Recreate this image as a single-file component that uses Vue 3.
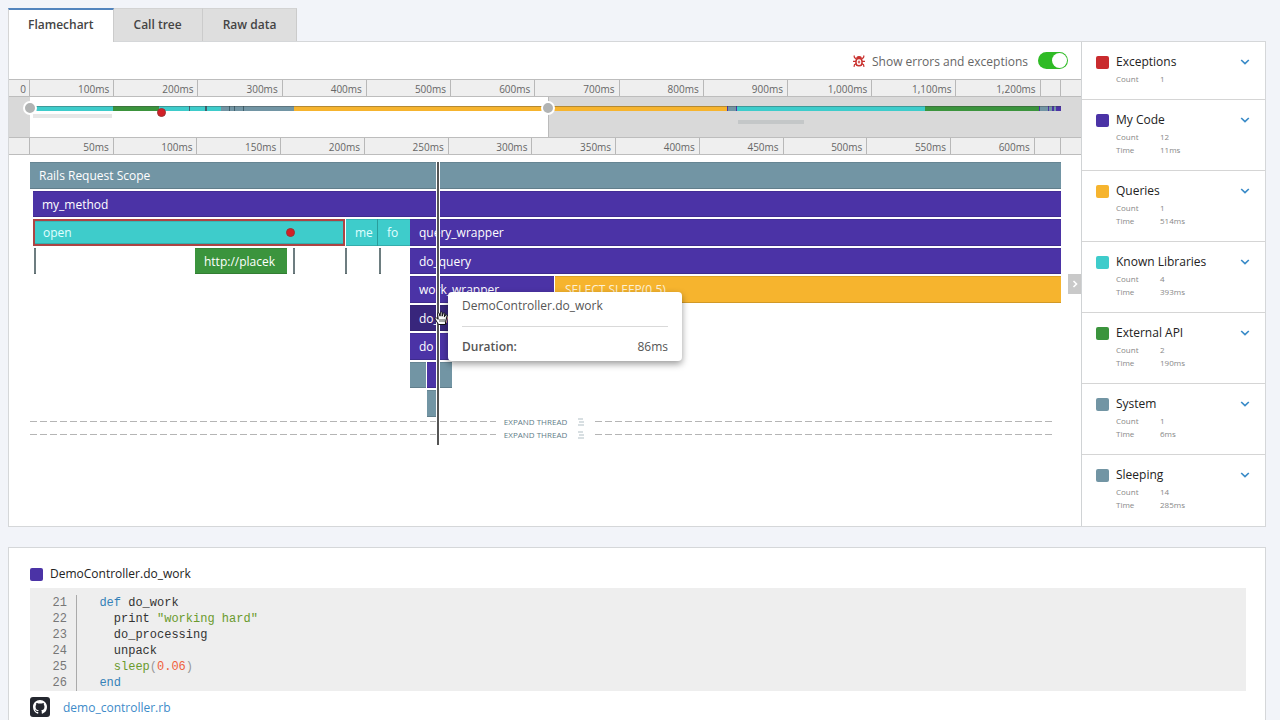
<script setup>
import { ref } from 'vue'

const SPAN = 1031

const tabs = ['Flamechart', 'Call tree', 'Raw data']
const activeTab = ref('Flamechart')
const showErrors = ref(true)

const percent = (units) => `${(units / SPAN) * 100}%`

const makeTicks = (step, total, format) => {
  const count = Math.floor(total / step)
  const ticks = []
  for (let i = 1; i <= count; i++) {
    ticks.push({ label: format(i * step), width: `${(step / total) * 100}%` })
  }
  return ticks
}
const label = (n) => `${n.toLocaleString('en-US')}ms`
const overviewTicks = makeTicks(100, 1223, label)
const detailTicks = makeTicks(50, 615, label)

const lay = (items) => {
  let end = 0
  return items.map(([from, to, kind, name = '', extra = '']) => {
    const style = { marginLeft: percent(from - end), width: percent(to - from) }
    end = to
    return { style, kind, name, extra }
  })
}

const overview = lay([
  [3, 83, 'library'], [83, 129, 'external'], [129, 159, 'library'], [159, 160, 'dark'],
  [160, 175, 'library'], [175, 177, 'dark'], [177, 191, 'library'], [191, 199, 'system'],
  [199, 200, 'dark'], [200, 204, 'system'], [204, 205, 'dark'], [205, 213, 'system'],
  [213, 214, 'dark'], [214, 264, 'system'], [264, 697, 'query'], [697, 698, 'code'],
  [698, 706, 'system'], [706, 707, 'code'], [707, 895, 'library'], [895, 1009, 'external'],
  [1009, 1010, 'code'], [1010, 1018, 'system'], [1018, 1019, 'code'], [1019, 1022, 'system'],
  [1022, 1024, 'code'], [1024, 1026, 'system'], [1026, 1031, 'code']
])

const rows = [
  lay([[0, 1031, 'system', 'Rails Request Scope']]),
  lay([[3, 1031, 'code', 'my_method']]),
  lay([
    [3, 315, 'library', 'open', 'failed'], [316, 348, 'library', 'me', 'split'],
    [348, 380, 'library', 'fo'], [380, 1031, 'code', 'query_wrapper']
  ]),
  lay([
    [4, 6, 'tick'], [165, 257, 'external', 'http://placek'], [263, 265, 'tick'],
    [315, 317, 'tick'], [349, 351, 'tick'], [380, 1031, 'code', 'do_query']
  ]),
  lay([[380, 524, 'code', 'work_wrapper'], [525, 1031, 'query', 'SELECT SLEEP(0.5)']]),
  lay([[380, 524, 'code', 'do_work', 'hovered']]),
  lay([[380, 407, 'code', 'do'], [409, 524, 'code']]),
  lay([[380, 396, 'system'], [397, 407, 'code'], [410, 422, 'system']]),
  lay([[397, 406, 'system']])
]

const groups = [
  { name: 'Exceptions', kind: 'error', count: '1' },
  { name: 'My Code', kind: 'code', count: '12', time: '11ms' },
  { name: 'Queries', kind: 'query', count: '1', time: '514ms' },
  { name: 'Known Libraries', kind: 'library', count: '4', time: '393ms' },
  { name: 'External API', kind: 'external', count: '2', time: '190ms' },
  { name: 'System', kind: 'system', count: '1', time: '6ms' },
  { name: 'Sleeping', kind: 'system', count: '14', time: '285ms' }
]

const code = [
  { n: 21, parts: [['kw', '  def'], ['', ' do_work']] },
  { n: 22, parts: [['', '    print '], ['str', '"working hard"']] },
  { n: 23, parts: [['', '    do_processing']] },
  { n: 24, parts: [['', '    unpack']] },
  { n: 25, parts: [['str', '    sleep'], ['punct', '('], ['num', '0.06'], ['punct', ')']] },
  { n: 26, parts: [['kw', '  end']] }
]
</script>

<template>
  <main class="page">
    <nav class="tabs">
      <button
        v-for="tab in tabs"
        :key="tab"
        type="button"
        class="tab"
        :class="{ active: tab === activeTab }"
        @click="activeTab = tab"
      >{{ tab }}</button>
    </nav>

    <section class="panel profiler">
      <div class="chart">
        <div class="toolbar">
          <svg class="bug" viewBox="0 0 12 12" aria-hidden="true">
            <g fill="none" stroke="#c9322f" stroke-width="1.2">
              <path d="M1 .5 1.5 2.6 3.4 4M11 .5 10.5 2.6 8.6 4M0 6.4h3M12 6.4H9M1 11.8 1.5 9.7 3.4 8.4M11 11.8 10.5 9.7 8.6 8.4" />
              <path d="M3.8 3.2C3.8.9 8.2.9 8.2 3.2Z" fill="#c9322f" />
              <rect x="3" y="3.6" width="6" height="7.2" rx="2.8" stroke-width="1.5" />
              <path d="M6 5.6v2.8M4.8 7h2.4" stroke-width="1" />
            </g>
          </svg>
          <label for="errors">Show errors and exceptions</label>
          <input id="errors" v-model="showErrors" class="switch" type="checkbox" />
        </div>

        <div class="ruler">
          <span class="origin">0</span>
          <div class="scale">
            <span v-for="t in overviewTicks" :key="t.label" class="mark" :style="{ width: t.width }">{{ t.label }}</span>
          </div>
        </div>

        <div class="minimap">
          <div class="map-track">
            <div class="selection" :style="{ width: percent(519) }"></div>
            <div class="shadow-thread" :style="{ left: percent(3), width: percent(79) }"></div>
            <div class="shadow-thread late" :style="{ left: percent(708), width: percent(66) }"></div>
            <div class="strip">
              <i v-for="(s, i) in overview" :key="i" :class="s.kind" :style="s.style"></i>
            </div>
            <span class="handle" :style="{ left: percent(0) }"></span>
            <span class="handle" :style="{ left: percent(518) }"></span>
            <span class="map-dot" :style="{ left: percent(132) }"></span>
          </div>
        </div>

        <div class="ruler">
          <span class="origin"></span>
          <div class="scale">
            <span v-for="t in detailTicks" :key="t.label" class="mark" :style="{ width: t.width }">{{ t.label }}</span>
          </div>
        </div>

        <div class="flame">
          <div class="rows">
            <div v-for="(row, r) in rows" :key="r" class="row">
              <div v-for="(b, i) in row" :key="i" class="bar" :class="[b.kind, b.extra]" :style="b.style">{{ b.name }}</div>
            </div>
          </div>
          <span class="error-dot" :style="{ left: percent(261) }"></span>
          <div class="threads">
            <div v-for="n in 2" :key="n" class="thread">
              <span class="dashes before"></span>
              <button type="button" class="expand">
                EXPAND THREAD
                <svg viewBox="0 0 8 8" aria-hidden="true"><path d="M1 1h5M2 4h5M1 7h6" stroke="#8fa5ae" stroke-width=".7" /></svg>
              </button>
              <span class="dashes after"></span>
            </div>
          </div>
          <span class="playhead" :style="{ left: percent(406) }"></span>
          <svg class="cursor" :style="{ left: percent(404) }" viewBox="0 0 16 16" aria-hidden="true">
            <path d="M4.5 14.5 1.2 9.2C.5 7.8 2 7.3 3.2 8.5L4.2 9.3 3.6 3.8C3.5 2.5 5 2.4 5.3 3.6L6 6.2 6.4 2.6C6.7 1.4 8.1 1.6 8.1 2.8V6.2L9.3 3.3C9.8 2.3 11 2.8 10.8 3.9L10.3 6.8 11.6 5C12.4 4.1 13.5 4.9 13.1 6L11.5 11.8V14.5Z" fill="#fff" stroke="#111" stroke-width="1" stroke-linejoin="round" />
            <path d="M6 9v3M8 9v3M10 9v3" stroke="#222" stroke-width=".8" />
          </svg>
          <div class="tooltip" :style="{ left: percent(418) }">
            <div class="tip-title">DemoController.do_work</div>
            <div class="tip-row"><strong>Duration:</strong><span>86ms</span></div>
          </div>
        </div>

        <button type="button" class="collapse" aria-label="Collapse">
          <svg viewBox="0 0 8 10"><path d="M2.5 2 5.5 5 2.5 8" fill="none" stroke="#fff" stroke-width="1.6" /></svg>
        </button>
      </div>

      <aside class="sidebar">
        <section v-for="g in groups" :key="g.name" class="group">
          <header class="group-head">
            <span class="swatch" :class="g.kind"></span>
            <h2>{{ g.name }}</h2>
            <button type="button" class="more" :aria-label="g.name">
              <svg viewBox="0 0 10 8"><path d="M1.2 2 5 5.6 8.8 2" fill="none" stroke="#3a8bc8" stroke-width="1.7" /></svg>
            </button>
          </header>
          <dl class="stats">
            <dt>Count</dt><dd>{{ g.count }}</dd>
            <template v-if="g.time"><dt>Time</dt><dd>{{ g.time }}</dd></template>
          </dl>
        </section>
      </aside>
    </section>

    <section class="panel source">
      <header class="source-head">
        <span class="swatch code"></span>
        <h2>DemoController.do_work</h2>
      </header>
      <div class="code-box">
        <div class="numbers"><div v-for="l in code" :key="l.n">{{ l.n }}</div></div>
        <div class="lines">
          <div v-for="l in code" :key="l.n"><span v-for="(p, i) in l.parts" :key="i" :class="p[0]">{{ p[1] }}</span></div>
        </div>
      </div>
      <div class="file">
        <svg class="github" viewBox="0 0 20 20" aria-hidden="true">
          <rect width="20" height="20" rx="3" fill="#24272f" />
          <path transform="translate(3 3) scale(.875)" fill="#fff" d="M8 0C3.58 0 0 3.58 0 8c0 3.54 2.29 6.53 5.47 7.59.4.07.55-.17.55-.38 0-.19-.01-.82-.01-1.49-2.01.37-2.53-.49-2.69-.94-.09-.23-.48-.94-.82-1.13-.28-.15-.68-.52-.01-.53.63-.01 1.08.58 1.23.82.72 1.21 1.87.87 2.33.66.07-.52.28-.87.51-1.07-1.78-.2-3.64-.89-3.64-3.95 0-.87.31-1.59.82-2.15-.08-.2-.36-1.02.08-2.12 0 0 .67-.21 2.2.82.64-.18 1.32-.27 2-.27s1.36.09 2 .27c1.53-1.04 2.2-.82 2.2-.82.44 1.1.16 1.92.08 2.12.51.56.82 1.27.82 2.15 0 3.07-1.87 3.75-3.65 3.95.29.25.54.73.54 1.48 0 1.07-.01 1.93-.01 2.2 0 .21.15.46.55.38A8.01 8.01 0 0 0 16 8c0-4.42-3.58-8-8-8z" />
        </svg>
        <a href="#demo_controller">demo_controller.rb</a>
      </div>
    </section>
  </main>
</template>

<style>
body {
  margin: 0;
  background: #f2f4f9;
}
</style>

<style scoped>
* {
  box-sizing: border-box;
}
.page {
  display: flex;
  flex-direction: column;
  min-height: 100vh;
  padding: 8px 14px 0 8px;
  font-family: "Open Sans", "Noto Sans", sans-serif;
  font-size: 12px;
  color: #333;
}
button {
  font: inherit;
  border: 0;
  padding: 0;
  background: none;
  cursor: pointer;
}
h2 {
  margin: 0;
  font-size: 12px;
  line-height: 16px;
  font-weight: 500;
  color: #222;
}
.system { background: #7295a4; }
.code { background: #4b33a6; }
.library { background: #3ecccb; }
.external { background: #3b943d; }
.query { background: #f6b42e; }
.error { background: #c92b2e; }
.dark { background: #40606c; }

.tabs {
  display: flex;
}
.tab {
  height: 33px;
  padding: 0 20px 1px;
  border-top: 1px solid #d3d3d3;
  border-right: 1px solid #cbcbcb;
  background: #dedede;
  color: #444;
  font-weight: 600;
}
.tab.active {
  height: 34px;
  margin-bottom: -1px;
  padding: 0 19px 3px;
  border-top: 2px solid #5284bd;
  border-left: 1px solid #d5d5d5;
  background: #fff;
  z-index: 1;
}
.panel {
  border: 1px solid #d5d7d9;
  background: #fff;
}
.profiler {
  display: flex;
}
.chart {
  flex: 1;
  min-width: 0;
  position: relative;
}
.toolbar {
  display: flex;
  align-items: center;
  justify-content: flex-end;
  height: 37px;
  padding-right: 13px;
  color: #666;
}
.toolbar label {
  padding-top: 2px;
}
.bug {
  width: 12px;
  height: 12px;
  margin-right: 7px;
}
.switch {
  appearance: none;
  width: 30px;
  height: 17px;
  margin: 0 0 0 10px;
  padding: 1px;
  border-radius: 9px;
  background: #ccc;
  display: flex;
}
.switch::before {
  content: "";
  width: 15px;
  height: 15px;
  border-radius: 50%;
  background: #fff;
}
.switch:checked {
  background: #2fbb25;
  justify-content: flex-end;
}
.ruler {
  display: flex;
  height: 18px;
  padding-right: 20px;
  border-top: 1px solid #bdbdbd;
  border-bottom: 1px solid #bdbdbd;
  background: #efefef;
  font-size: 10px;
  line-height: 18px;
  color: #666;
}
.origin {
  width: 21px;
  border-right: 1px solid #b8b8b8;
  padding-right: 3px;
  text-align: right;
}
.scale {
  flex: 1;
  display: flex;
  border-right: 1px solid #b8b8b8;
}
.mark {
  border-right: 1px solid #b8b8b8;
  padding-right: 4px;
  text-align: right;
}
.minimap {
  height: 40px;
  padding: 0 20px 0 21px;
  background: #d9d9d9;
}
.map-track {
  position: relative;
  height: 40px;
  padding-top: 9px;
}
.selection {
  position: absolute;
  top: 0;
  left: 0;
  height: 40px;
  background: #fff;
  border-right: 1px solid #bbb;
}
.strip {
  position: relative;
  display: flex;
  height: 5px;
}
.strip i {
  box-shadow: inset 0 1px rgba(60, 60, 60, 0.35);
}
.shadow-thread {
  position: absolute;
  top: 17px;
  height: 4px;
  background: #e7e7e7;
}
.shadow-thread.late {
  top: 23px;
  background: #c4c7c8;
}
.handle {
  position: absolute;
  top: 4px;
  width: 14px;
  height: 14px;
  margin-left: -7px;
  border: 2px solid #fff;
  border-radius: 50%;
  background: #b1b3b3;
}
.map-dot,
.error-dot {
  position: absolute;
  top: 11px;
  width: 9px;
  height: 9px;
  margin-left: -5px;
  border-radius: 50%;
  border: 1px solid #9c3133;
  background: #d22027;
}
.flame {
  position: relative;
  margin: 7px 20px 0 21px;
}
.rows {
  display: grid;
  grid-template-rows: repeat(9, 1fr);
  gap: 2px;
  height: 255px;
}
.row {
  display: flex;
  min-height: 0;
}
.bar {
  flex: none;
  overflow: hidden;
  padding-left: 9px;
  white-space: nowrap;
  font-weight: 500;
  line-height: 27px;
  color: #fff;
  box-shadow: inset 0 -1px rgba(0, 0, 0, 0.15), inset 0 1px rgba(0, 0, 0, 0.1);
}
.bar.library {
  color: #e0ffff;
}
.bar.query {
  padding-left: 10px;
  color: #fdf1d6;
}
.bar.split {
  border-right: 1px solid #2a9d9c;
}
.bar.failed {
  padding-left: 8px;
  line-height: 24px;
  border: 2px solid #ad4444;
}
.bar.hovered {
  background: #38267c;
}
.bar.tick {
  padding: 0;
  background: #6d7d80;
}
.error-dot {
  top: 66px;
}
.threads {
  margin-top: -2px;
  padding-right: 9px;
}
.thread {
  display: flex;
  align-items: center;
  height: 13px;
}
.dashes {
  flex: 50;
  height: 1px;
  background: repeating-linear-gradient(90deg, #b5b5b5 0 7px, transparent 7px 10px);
}
.dashes.before {
  flex: 51;
}
.expand {
  display: flex;
  align-items: center;
  padding: 0 10px 0 8px;
  font-size: 8px;
  font-weight: 500;
  line-height: 12px;
  color: #5f7d89;
}
.expand svg {
  width: 8px;
  height: 8px;
  margin-left: 10px;
}
.playhead {
  position: absolute;
  top: 0;
  width: 4px;
  height: 283px;
  border: solid #fff;
  border-width: 0 1px;
  background: #555;
}
.cursor {
  position: absolute;
  top: 148px;
  width: 16px;
  height: 16px;
}
.tooltip {
  position: absolute;
  top: 130px;
  width: 234px;
  padding: 0 14px;
  border-radius: 4px;
  background: #fff;
  box-shadow: 0 3px 7px rgba(0, 0, 0, 0.4);
  color: #555;
}
.tip-title {
  height: 35px;
  line-height: 28px;
  border-bottom: 1px solid #d9d9d9;
}
.tip-row {
  display: flex;
  justify-content: space-between;
  padding: 10px 0 5px;
  line-height: 19px;
}
.tip-row strong {
  font-weight: 600;
}
.collapse {
  position: absolute;
  right: 0;
  top: 232px;
  width: 13px;
  height: 20px;
  display: flex;
  align-items: center;
  justify-content: center;
  background: #c9c9c9;
}
.collapse svg {
  width: 8px;
  height: 10px;
}
.sidebar {
  width: 184px;
  border-left: 1px solid #d0d3d5;
}
.group {
  padding: 12px 15px 14px 14px;
  border-bottom: 1px solid #d5d5d5;
}
.group:last-child {
  padding-bottom: 15px;
  border-bottom: 0;
}
.group-head,
.source-head {
  display: flex;
  align-items: center;
}
.swatch {
  width: 13px;
  height: 13px;
  margin-right: 7px;
  border-radius: 2px;
}
.more {
  width: 10px;
  height: 8px;
  margin-left: auto;
  display: flex;
}
.stats {
  display: grid;
  grid-template-columns: 44px 1fr;
  margin: 2px 0 0 20px;
  font-size: 8px;
  line-height: 13px;
  color: #888;
}
.stats dd {
  margin: 0;
}
.source {
  flex: 1;
  margin-top: 20px;
  padding: 18px 19px 0 21px;
  border-bottom: 0;
}
.code-box {
  display: flex;
  margin-top: 6px;
  padding: 7px 0 0;
  background: #eee;
  font-family: "Liberation Mono", monospace;
  font-size: 12px;
  line-height: 16px;
  color: #333;
}
.numbers {
  width: 47px;
  padding-right: 9px;
  border-right: 1px solid #aaa;
  text-align: right;
  color: #777;
}
.lines {
  padding-left: 8px;
  white-space: pre;
}
.kw { color: #3581b8; }
.str { color: #6a9a2d; }
.num { color: #f0603c; }
.punct { color: #999; }
.file {
  display: flex;
  align-items: center;
  margin-top: 6px;
}
.github {
  width: 20px;
  height: 20px;
  margin-right: 13px;
}
.file a {
  color: #3d8bc9;
  text-decoration: none;
}
</style>
